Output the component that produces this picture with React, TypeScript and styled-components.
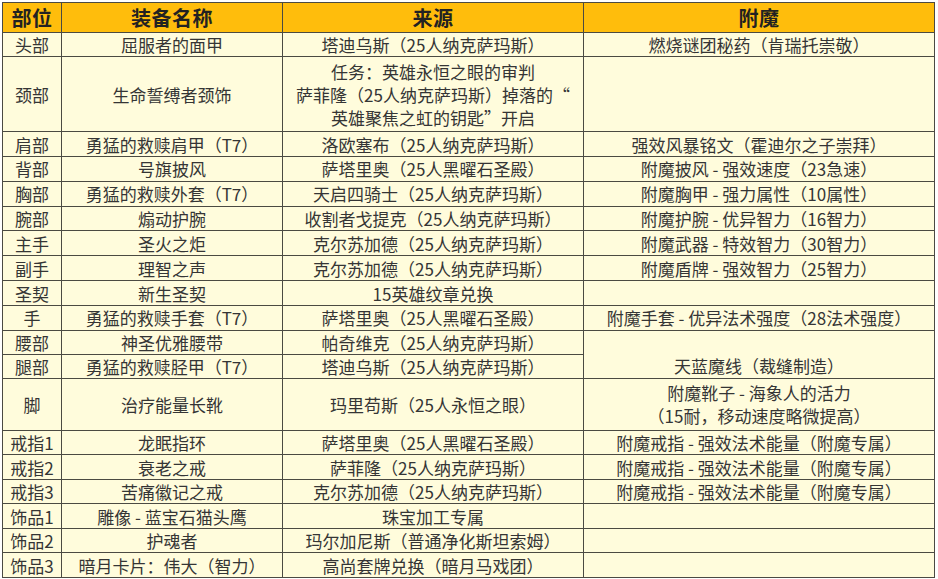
import React from 'react';
import styled, { createGlobalStyle } from 'styled-components';

const GlobalStyle = createGlobalStyle`
  html, body {
    margin: 0;
    padding: 0;
    background: #ffffff;
  }
  body {
    font-family: "Noto Sans CJK SC", "Noto Sans", sans-serif;
  }
`;

const Page = styled.main`
  padding: 2px 0 0 2px;
`;

// Borders come from the grid background showing through the 1px gaps
const Sheet = styled.div`
  display: grid;
  width: max-content;
  grid-template-columns: 58px 220px 300px 350px;
  grid-template-rows:
    29px 23px 74px 24px repeat(6, 23.83px) 24px 23px 23px 51px
    repeat(6, 23.5px);
  gap: 1px;
  padding: 1px;
  background: #4b4a42;
`;

const HeadCell = styled.div`
  display: flex;
  align-items: center;
  justify-content: center;
  background: #ffbd0c;
  color: #222;
  font-size: 20px;
  font-weight: 700;
  letter-spacing: 0.5px;
`;

const Cell = styled.div<{ $span?: number; $bottom?: boolean }>`
  display: flex;
  flex-direction: column;
  align-items: center;
  justify-content: ${(p) => (p.$bottom ? 'flex-end' : 'center')};
  grid-row: ${(p) => (p.$span ? `span ${p.$span}` : 'auto')};
  padding-bottom: ${(p) => (p.$bottom ? '1px' : '0')};
  background: #fffcdc;
  color: #353535;
  font-size: 17px;
  line-height: 23px;
  text-align: center;
  white-space: nowrap;
`;

type Row = {
  slot: string;
  item: string;
  source: string[];
  enchant?: string[];
  span?: number;
  skip?: boolean;
};

const rows: Row[] = [
  { slot: '头部', item: '屈服者的面甲', source: ['塔迪乌斯（25人纳克萨玛斯）'], enchant: ['燃烧谜团秘药（肯瑞托崇敬）'] },
  {
    slot: '颈部',
    item: '生命誓缚者颈饰',
    source: ['任务：英雄永恒之眼的审判', '萨菲隆（25人纳克萨玛斯）掉落的“', '英雄聚焦之虹的钥匙”开启'],
    enchant: [],
  },
  { slot: '肩部', item: '勇猛的救赎肩甲（T7）', source: ['洛欧塞布（25人纳克萨玛斯）'], enchant: ['强效风暴铭文（霍迪尔之子崇拜）'] },
  { slot: '背部', item: '号旗披风', source: ['萨塔里奥（25人黑曜石圣殿）'], enchant: ['附魔披风 - 强效速度（23急速）'] },
  { slot: '胸部', item: '勇猛的救赎外套（T7）', source: ['天启四骑士（25人纳克萨玛斯）'], enchant: ['附魔胸甲 - 强力属性（10属性）'] },
  { slot: '腕部', item: '煽动护腕', source: ['收割者戈提克（25人纳克萨玛斯）'], enchant: ['附魔护腕 - 优异智力（16智力）'] },
  { slot: '主手', item: '圣火之炬', source: ['克尔苏加德（25人纳克萨玛斯）'], enchant: ['附魔武器 - 特效智力（30智力）'] },
  { slot: '副手', item: '理智之声', source: ['克尔苏加德（25人纳克萨玛斯）'], enchant: ['附魔盾牌 - 强效智力（25智力）'] },
  { slot: '圣契', item: '新生圣契', source: ['15英雄纹章兑换'], enchant: [] },
  { slot: '手', item: '勇猛的救赎手套（T7）', source: ['萨塔里奥（25人黑曜石圣殿）'], enchant: ['附魔手套 - 优异法术强度（28法术强度）'] },
  { slot: '腰部', item: '神圣优雅腰带', source: ['帕奇维克（25人纳克萨玛斯）'], enchant: ['天蓝魔线（裁缝制造）'], span: 2 },
  { slot: '腿部', item: '勇猛的救赎胫甲（T7）', source: ['塔迪乌斯（25人纳克萨玛斯）'], skip: true },
  { slot: '脚', item: '治疗能量长靴', source: ['玛里苟斯（25人永恒之眼）'], enchant: ['附魔靴子 - 海象人的活力', '（15耐，移动速度略微提高）'] },
  { slot: '戒指1', item: '龙眠指环', source: ['萨塔里奥（25人黑曜石圣殿）'], enchant: ['附魔戒指 - 强效法术能量（附魔专属）'] },
  { slot: '戒指2', item: '衰老之戒', source: ['萨菲隆（25人纳克萨玛斯）'], enchant: ['附魔戒指 - 强效法术能量（附魔专属）'] },
  { slot: '戒指3', item: '苦痛徽记之戒', source: ['克尔苏加德（25人纳克萨玛斯）'], enchant: ['附魔戒指 - 强效法术能量（附魔专属）'] },
  { slot: '饰品1', item: '雕像 - 蓝宝石猫头鹰', source: ['珠宝加工专属'], enchant: [] },
  { slot: '饰品2', item: '护魂者', source: ['玛尔加尼斯（普通净化斯坦索姆）'], enchant: [] },
  { slot: '饰品3', item: '暗月卡片：伟大（智力）', source: ['高尚套牌兑换（暗月马戏团）'], enchant: [] },
];

const Lines = ({ lines }: { lines: string[] }) => (
  <>
    {lines.map((line, i) => (
      <span key={i}>{line}</span>
    ))}
  </>
);

const App = (): JSX.Element => {
  return (
    <Page>
      <GlobalStyle />
      <Sheet>
        <HeadCell>部位</HeadCell>
        <HeadCell>装备名称</HeadCell>
        <HeadCell>来源</HeadCell>
        <HeadCell>附魔</HeadCell>
        {rows.map((row) => (
          <React.Fragment key={row.slot}>
            <Cell>{row.slot}</Cell>
            <Cell>{row.item}</Cell>
            <Cell>
              <Lines lines={row.source} />
            </Cell>
            {!row.skip && (
              <Cell $span={row.span} $bottom={!!row.span}>
                <Lines lines={row.enchant ?? []} />
              </Cell>
            )}
          </React.Fragment>
        ))}
      </Sheet>
    </Page>
  );
};

export default App;
